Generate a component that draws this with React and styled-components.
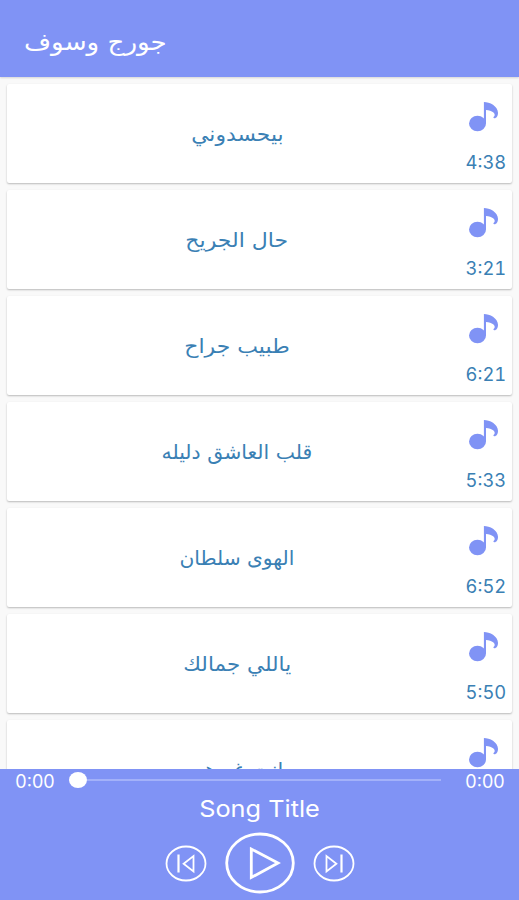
import styled, { createGlobalStyle } from "styled-components";

const GlobalStyle = createGlobalStyle`
  * {
    box-sizing: border-box;
  }
  body {
    margin: 0;
    background: #f9f9f9;
    font-family: "DejaVu Sans", sans-serif;
  }
`;

const Screen = styled.div`
  display: flex;
  flex-direction: column;
  width: 519px;
  height: 900px;
  overflow: hidden;
  background: #f9f9f9;
`;

const Header = styled.header`
  flex: none;
  display: flex;
  align-items: center;
  height: 77px;
  padding: 7px 24px 0;
  background: #8093f5;
  box-shadow: 0 1px 2px rgba(0, 0, 0, 0.15);
`;

const Artist = styled.h1`
  margin: 0;
  color: #fff;
  font-size: 24px;
  line-height: 32px;
  font-weight: 400;
  white-space: nowrap;
  transform: scaleX(${(props) => props.$stretch});
  transform-origin: left;
`;

const List = styled.ul`
  flex: 1;
  min-height: 0;
  display: flex;
  flex-direction: column;
  gap: 7px;
  margin: 0;
  padding: 7px 7px 0;
  overflow: hidden;
  list-style: none;
`;

const Card = styled.li`
  flex: none;
  display: flex;
  height: 99px;
  background: #fff;
  border-radius: 2px;
  box-shadow: 0 1px 2px rgba(0, 0, 0, 0.26);
`;

const SongName = styled.div`
  flex: 1;
  padding: 36px 0 0 5px;
  color: #3a80b4;
  font-size: 20px;
  line-height: 28px;
  text-align: center;
  span {
    display: inline-block;
    white-space: nowrap;
    transform: scaleX(${(props) => props.$stretch});
  }
`;

const Side = styled.div`
  width: 50px;
  display: flex;
  flex-direction: column;
  align-items: center;
  padding: 17px 4px 0 0;
  svg {
    flex: none;
  }
`;

const Duration = styled.div`
  margin: 19px 0 0 2px;
  color: #3a80b4;
  font-family: Inter, sans-serif;
  font-size: 18px;
  line-height: 22px;
  font-variant-numeric: tabular-nums;
  transform: scaleX(${(props) => props.$stretch});
`;

const Player = styled.footer`
  flex: none;
  height: 131px;
  background: #8093f5;
  color: #fff;
`;

const Progress = styled.div`
  display: flex;
  align-items: center;
  height: 24px;
  padding: 0 14px 0 15px;
`;

const Clock = styled.div`
  flex: none;
  width: 40px;
  display: flex;
  justify-content: center;
  padding-top: 2px;
  font-family: Inter, sans-serif;
  font-size: 18px;
  line-height: 24px;
`;

const Track = styled.div`
  flex: 1;
  display: flex;
  align-items: center;
  height: 22px;
  margin: 0 24px 2px 14px;
`;

const Thumb = styled.div`
  width: 18px;
  height: 16px;
  border-radius: 50%;
  background: #fff;
`;

const Line = styled.div`
  flex: 1;
  height: 2px;
  background: #a3b1f9;
`;

const Title = styled.div`
  height: 32px;
  font-family: Inter, sans-serif;
  font-size: 23px;
  line-height: 32px;
  text-align: center;
  transform: scaleX(1.1);
`;

const Controls = styled.div`
  display: flex;
  align-items: center;
  justify-content: center;
  gap: 18px;
  padding-top: 7px;
`;

const ControlButton = styled.button`
  display: block;
  padding: 0;
  border: 0;
  background: none;
  color: #fff;
  svg {
    display: block;
  }
`;

const songs = [
  { name: "بيحسدوني", time: "4:38", stretch: 1.09 },
  { name: "حال الجريح", time: "3:21", stretch: 1.1 },
  { name: "طبيب جراح", time: "6:21", stretch: 1.1 },
  { name: "قلب العاشق دليله", time: "5:33", stretch: 1.02 },
  { name: "الهوى سلطان", time: "6:52", stretch: 1.01 },
  { name: "ياللي جمالك", time: "5:50", stretch: 1.075 },
  { name: "انت غيرهم", stretch: 1.04 },
];

const NoteIcon = () => (
  <svg width="32" height="32" viewBox="0 0 32 32" fill="#8093f5">
    <ellipse cx="8.500" cy="22.500" rx="8.500" ry="7.700" />
    <path d="M14.900 1C20.500 1 29 5 29 11.800c0 3.300-1.700 5.500-3.500 5.500-1.300 0-1.500-1.300-.4-1.700C27.500 13 23 9 17 9V22.500h-2.100z" />
  </svg>
);

const SkipIcon = ({ next }) => (
  <svg
    width="42"
    height="37"
    viewBox="0 0 42 37"
    fill="none"
    stroke="currentColor"
    strokeWidth="1.8"
  >
    <ellipse cx="21" cy="18.500" rx="19.500" ry="17" />
    <g transform={next ? undefined : "translate(42 0) scale(-1 1)"}>
      <path d="M13.500 11v15.500l9.900-7.750z" />
      <path d="M28.500 9.500v18" strokeWidth="2.200" />
    </g>
  </svg>
);

const PlayIcon = () => (
  <svg
    width="70"
    height="62"
    viewBox="0 0 70 62"
    fill="none"
    stroke="currentColor"
    strokeWidth="2.800"
  >
    <ellipse cx="35" cy="31" rx="33.300" ry="29" />
    <path d="M26.300 17v28.500L53 31z" />
  </svg>
);

const Song = ({ name, time, stretch }) => {
  return (
    <Card>
      <SongName $stretch={stretch}>
        <span dir="rtl">{name}</span>
      </SongName>
      <Side>
        <NoteIcon />
        {time && <Duration $stretch={1.02}>{time}</Duration>}
      </Side>
    </Card>
  );
};

const App = () => {
  return (
    <Screen>
      <GlobalStyle />
      <Header>
        <Artist dir="rtl" $stretch={1.09}>
          جورج وسوف
        </Artist>
      </Header>
      <List>
        {songs.map((song) => (
          <Song key={song.name} {...song} />
        ))}
      </List>
      <Player>
        <Progress>
          <Clock>0:00</Clock>
          <Track>
            <Thumb />
            <Line />
          </Track>
          <Clock>0:00</Clock>
        </Progress>
        <Title>Song Title</Title>
        <Controls>
          <ControlButton aria-label="Previous">
            <SkipIcon />
          </ControlButton>
          <ControlButton aria-label="Play">
            <PlayIcon />
          </ControlButton>
          <ControlButton aria-label="Next">
            <SkipIcon next />
          </ControlButton>
        </Controls>
      </Player>
    </Screen>
  );
};

export default App;
